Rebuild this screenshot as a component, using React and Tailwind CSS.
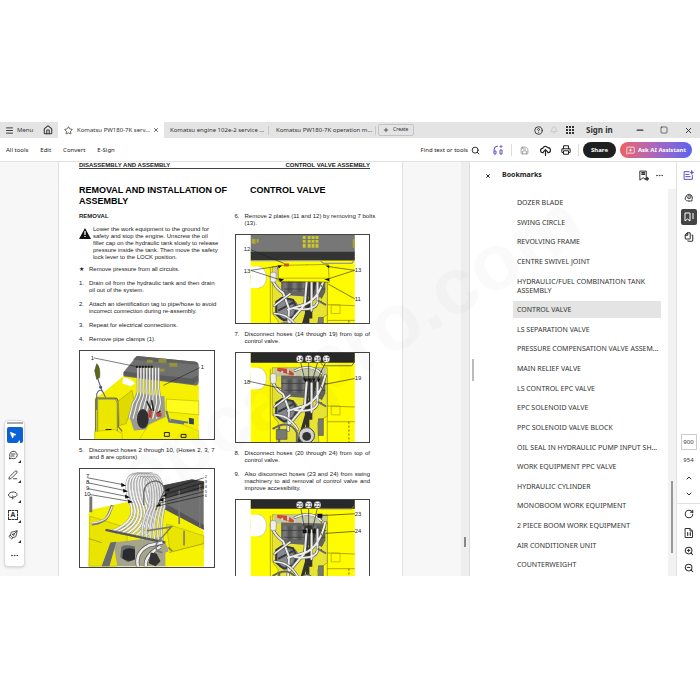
import React from "react";
import {
  Menu, House, Star, X, Plus, CircleHelp, Bell, Minus, Square, Search, Save,
  Printer, MessageSquarePlus, Ellipsis, Files, ChevronUp, ChevronDown, RotateCw,
  ZoomIn, ZoomOut, MousePointer2, PenLine, PenTool,
} from "lucide-react";

const bookmarks = [
  "DOZER BLADE",
  "SWING CIRCLE",
  "REVOLVING FRAME",
  "CENTRE SWIVEL JOINT",
  "HYDRAULIC/FUEL COMBINATION TANK ASSEMBLY",
  "CONTROL VALVE",
  "LS SEPARATION VALVE",
  "PRESSURE COMPENSATION VALVE ASSEM...",
  "MAIN RELIEF VALVE",
  "LS CONTROL EPC VALVE",
  "EPC SOLENOID VALVE",
  "PPC SOLENOID VALVE BLOCK",
  "OIL SEAL IN HYDRAULIC PUMP INPUT SH...",
  "WORK EQUIPMENT PPC VALVE",
  "HYDRAULIC CYLINDER",
  "MONOBOOM WORK EQUIPMENT",
  "2 PIECE BOOM WORK EQUIPMENT",
  "AIR CONDITIONER UNIT",
  "COUNTERWEIGHT",
];

const IconButton = ({ label, className = "", children }) => (
  <button type="button" aria-label={label} className={`flex shrink-0 items-center justify-center ${className}`}>
    {children}
  </button>
);

const Glyph = ({ size = 10, children }) => (
  <svg width={size} height={size} viewBox="0 0 20 20" fill="none" stroke="currentColor" strokeWidth="1.800" strokeLinecap="round" strokeLinejoin="round">
    {children}
  </svg>
);

const CloudArrow = () => (
  <Glyph size={11}>
    <path d="M6 14H5a4 4 0 0 1 0-8 5 5 0 0 1 9-1 4.500 4.500 0 0 1 1 9h-1" strokeWidth="2.200" />
    <path d="M10 19V9M6.500 12L10 8.500l3.500 3.500" strokeWidth="2.200" />
  </Glyph>
);

const CommentIcon = () => (
  <Glyph>
    <path d="M3 17l1-4a7.500 7.500 0 1 1 4 4zM7 8h7M7 12h5" />
  </Glyph>
);

const LoopIcon = () => (
  <Glyph>
    <path d="M9 15c-5 0-8-2-8-5s4-6 9-6 8 2 8 5-3 5-6 5c-2 0-3-1-3-2M9 15c3 0 2 3 0 3" />
  </Glyph>
);

const BookmarkAddIcon = () => (
  <Glyph size={11}>
    <path d="M4 2h11v16l-5.500-4L4 18z" />
    <path d="M7 5h5M7 8h5" strokeWidth="2.500" />
    <path d="M12 16h7M16.500 13.500L19 16l-2.500 2.500" strokeWidth="2.200" />
  </Glyph>
);

const SummaryIcon = () => (
  <Glyph size={11}>
    <path d="M11 3H2v14h15v-7M5 8h6M5 12h8" />
    <path d="M16 1l1 2.500L19.500 4.500 17 5.500 16 8l-1-2.500L12.500 4.500 15 3.500z" fill="currentColor" strokeWidth="1" />
  </Glyph>
);

const RepliesIcon = () => (
  <Glyph>
    <path d="M3 13a7 7 0 1 1 13 2v3h-6" />
    <path d="M6 9c1-3 7-4 8 0s-3 5-6 4c-2-1-1-3 1-3h4M2 14c1 3 4 4 8 4" />
  </Glyph>
);

const PageIcon = () => (
  <Glyph>
    <path d="M3 1h9l5 5v13H3zM12 1v5h5" strokeWidth="2" />
    <path d="M7 9v6M13 9v6M10 10v.5M10 13.500v.5" />
  </Glyph>
);

const TabBar = () => (
  <div className="flex h-4 items-center bg-[#e4e4e4] text-[6px] text-[#333]">
    <button type="button" className="flex w-[37px] items-center gap-[3px] pl-[5px]">
      <Menu size={9} strokeWidth={2.500} /> Menu
    </button>
    <IconButton label="Home" className="w-[21px]"><House size={10} strokeWidth={2.500} /></IconButton>
    <div className="flex h-4 w-[106px] items-center bg-white pl-[6px] pr-[5px]">
      <Star size={9} />
      <span className="ml-1 flex-1 whitespace-nowrap">Komatsu PW180-7K serv...</span>
      <IconButton label="Close tab"><X size={6} strokeWidth={3} /></IconButton>
    </div>
    <span className="w-[105px] whitespace-nowrap border-r border-[#c8c8c8] pl-[6px]">Komatsu engine 102e-2 service ...</span>
    <span className="w-[107px] whitespace-nowrap border-r border-[#c8c8c8] pl-[7px]">Komatsu PW180-7K operation m...</span>
    <button type="button" className="ml-[2px] flex h-3 w-[36px] items-center gap-1 rounded-[2px] border border-[#c4c4c4] pl-1 text-[5px]">
      <Plus size={6} strokeWidth={3} /> Create
    </button>
    <div className="flex-1" />
    <div className="flex items-center">
      <IconButton label="Help" className="w-4"><CircleHelp size={9} strokeWidth={2.500} /></IconButton>
      <IconButton label="Notifications" className="w-4 text-[#bbb]"><Bell size={8} /></IconButton>
      <IconButton label="Apps" className="w-4">
        <svg width="8" height="8" viewBox="0 0 8 8" fill="#333">
          {[0, 3, 6].map((y) => [0, 3, 6].map((x) => <rect key={`${x}${y}`} x={x} y={y} width="2" height="2" />))}
        </svg>
      </IconButton>
      <button type="button" className="ml-2 w-[44px] text-left text-[8px] leading-4 font-bold">Sign in</button>
      <IconButton label="Minimize" className="w-5"><Minus size={10} strokeWidth={3} /></IconButton>
      <IconButton label="Maximize" className="ml-1 w-5"><Square size={8} /></IconButton>
      <IconButton label="Close" className="ml-1 mr-[2px] w-5"><X size={9} strokeWidth={2.500} /></IconButton>
    </div>
  </div>
);

const Toolbar = () => (
  <div className="flex h-6 items-center border-b border-[#e2e2e2] bg-white pt-px text-[6px] text-[#222]">
    <nav className="flex items-center gap-3 pl-[6px]">
      <button type="button">All tools</button>
      <button type="button">Edit</button>
      <button type="button">Convert</button>
      <button type="button">E-Sign</button>
    </nav>
    <div className="flex-1" />
    <button type="button" className="flex items-center gap-[3px]">Find text or tools <Search size={9} strokeWidth={2.500} /></button>
    <IconButton label="Read aloud" className="ml-3 w-[13px] text-[#5a50c8]">
      <svg width="11" height="10" viewBox="0 0 11 10" fill="none" stroke="currentColor">
        <path d="M1 9V5a4 4 0 0 1 4-4M1 6h2v3H1M7 5v4M7 5h2v4H7" />
        <path d="M8 0v3M6.500 1.500h3" strokeWidth=".8" />
      </svg>
    </IconButton>
    <span className="ml-[6px] h-3 w-px bg-[#ddd]" />
    <IconButton label="Save" className="ml-[6px] w-3 text-[#888]"><Save size={9} /></IconButton>
    <IconButton label="Upload" className="ml-[9px] w-3"><CloudArrow /></IconButton>
    <IconButton label="Print" className="ml-[9px] w-3"><Printer size={10} strokeWidth={2.500} /></IconButton>
    <span className="ml-[6px] h-3 w-px bg-[#ddd]" />
    <button type="button" className="ml-[4px] h-4 w-[33px] rounded-full bg-[#1f1f1f] text-[6px] font-bold text-white">Share</button>
    <button type="button" className="ml-1 mr-2 flex h-4 w-[72px] items-center justify-center gap-[3px] whitespace-nowrap rounded-full bg-linear-to-r from-[#ee5f62] via-[#a865c0] to-[#5962ee] text-[6px] font-bold text-white">
      <MessageSquarePlus size={9} /> Ask AI Assistant
    </button>
  </div>
);

/* A list entry of the manual; every line but the last runs the full column */
const Step = ({ n, lines }) => (
  <div className="flex">
    <span className="w-[10px] shrink-0">{n}</span>
    <div className="flex-1">
      {lines.map((line, i) => (
        <p
          key={line}
          className={i < lines.length - 1 ? "whitespace-nowrap [text-align-last:justify]" : "whitespace-nowrap"}
        >
          {line}
        </p>
      ))}
    </div>
  </div>
);

const Label = ({ x, y, size = 6, children }) => (
  <text x={x} y={y} fontSize={size} fill="#222" fontFamily="Liberation Sans, sans-serif">{children}</text>
);

const ClampFigure = () => (
  <svg viewBox="0 0 136 90" className="block w-full border border-[#444]">
    <path d="M15 91V48l8-5 22-18 14-4 62 13v57z" fill="#f4f000" />
    <path d="M18 49h18l2 4v29l-6 2-14 4z" fill="#ece700" stroke="#777" strokeWidth=".8" />
    <path d="M16 91V50q0-3 4-2h15q4 0 4 5v24l4 5" fill="none" stroke="#666" strokeWidth="1.200" />
    <path d="M15 82l20-2 8 4v7H15z" fill="#f4f000" stroke="#aaa000" strokeWidth=".5" />
    <path d="M39 51l14-11 2 10-8 24-7 2z" fill="#dfda00" stroke="#999300" strokeWidth=".5" />
    <path d="M88 49l33 2v14l-33-3z" fill="#fffb1c" stroke="#b5ae00" strokeWidth=".6" />
    <path d="M58 5l60 6q3 1 3 4v17q-1 4-5 3l-14-2-57-7-1-4z" fill="#707070" />
    <path d="M58 5l60 6q2 1 2 3l-66-5z" fill="#606060" />
    <path d="M44 25l57 7 14 2 5-4v-5l-6 3-69-7z" fill="#5b5b5b" />
    <path d="M68 9h6v3h-6zM80 8h8v4h-8zM91 12h8v4h-8zM66 16h5v3h-5zM80 18h6v3h-6z" fill="#a19b35" opacity=".8" />
    <path d="M44 27q8 1 12 6l-4 3-9-3z" fill="#fff" />
    <path d="M17 13q4 3 3 14l-3 2-2-9z" fill="#5e6810" stroke="#333" strokeWidth=".5" />
    <path d="M18 28l5 14M17 60V44q2-6 6-3l3 6" fill="none" stroke="#667" strokeWidth="1.100" />
    <circle cx="21" cy="37" r="1.500" fill="#43537a" />
    <path d="M57 43l29 3 1 22-8 11-24 2-5-15z" fill="#9c9c93" />
    <g fill="none">
      {[0, 1, 2, 3, 4, 5, 6, 7].map((i) => (
        <path key={i} d={`M${59 + i * 3} 17v20q1 8 ${-5 + i} 16l-4 16`} stroke="#888" strokeWidth="2.300" />
      ))}
      {[0, 1, 2, 3, 4, 5, 6, 7].map((i) => (
        <path key={i} d={`M${59 + i * 3} 17v20q1 8 ${-5 + i} 16l-4 16`} stroke="#eee" strokeWidth="1.300" />
      ))}
    </g>
    <ellipse cx="64" cy="69" rx="6" ry="10" fill="#303033" />
    <path d="M68 51l5 10M73 50l2 11M78 64l4-3" stroke="#222" strokeWidth="1.500" />
    <path d="M70 60h3v8h-3zM78 63h5v4h-5z" fill="#c63b2c" />
    <path d="M70 75l17-8 34 15v9H60z" fill="#f5f100" stroke="#aaa400" strokeWidth=".4" />
    <path d="M88 61l3 11 15 2M92 70l18 3" fill="none" stroke="#677484" strokeWidth="2" />
    <path d="M111 68l5 1v6l-5-1z" fill="#35445e" />
    <path d="M86 83h5v4h-5zM103 85h5v3h-5zM26 80h6" fill="none" stroke="#222" />
    <path d="M57 16h18" stroke="#111" strokeWidth="2" strokeDasharray="2 1" />
    <path d="M14 7l44 9M122 17L85 35" stroke="#222" strokeWidth=".6" />
    <Label x={11} y={9}>1</Label>
    <Label x={123} y={18}>1</Label>
  </svg>
);

const HoseFigure = () => (
  <svg viewBox="0 0 136 99" className="block w-full border border-[#444]">
    <path d="M9 99V42l38-8 40 1 39 28v36z" fill="#f4f100" />
    <path d="M85 17l29-6 12 2v49L84 39z" fill="#707070" />
    <path d="M85 17l29-6 12 2v7L87 29zM86 36l40 25" fill="#414141" stroke="#444" />
    <path d="M90 37l36 20v5L86 41z" fill="#555" />
    <path d="M101 22v34M122 16v44" stroke="#777" strokeWidth="1.500" />
    <path d="M10 48l38 12v31l-11 8H9zM88 56l38 12v13l-34 6z" fill="#e9e500" stroke="#b3ad00" strokeWidth=".6" />
    <path d="M11 28v16M33 37l-4 10q-4 8-17 9" fill="none" stroke="#777" strokeWidth="3" />
    <path d="M33 38l-4 9q-4 7-17 8" fill="none" stroke="#e1e1d8" strokeWidth="1.500" />
    <path d="M34 75l49-6 7 12-1 18H38z" fill="#a5a58b" />
    <g fill="none">
      {[0, 1, 2, 3, 4, 5, 6, 7].map((i) => {
        const d = `M${31 + i * 5} ${64 + i} Q${61 + i * 3} 53 ${50 + i * 3} 32 Q${42 + i * 3} 4 ${60 + i * 2} 5`;
        return (
          <React.Fragment key={i}>
            <path d={d} stroke="#888" strokeWidth="2.600" />
            <path d={d} stroke="#f3f3f3" strokeWidth="1.800" />
          </React.Fragment>
        );
      })}
      {[0, 1, 2, 3, 4, 5].map((i) => {
        const d = `M${60 + i * 3} 6 Q${75 + i * 2} 6 ${71 + i * 3} 38 Q${61 + i * 4} 57 ${64 + i * 4} 72`;
        return (
          <React.Fragment key={i}>
            <path d={d} stroke="#888" strokeWidth="2.600" />
            <path d={d} stroke="#e3e3e3" strokeWidth="1.800" />
          </React.Fragment>
        );
      })}
    </g>
    <path d="M65 37V24q1-11 12-12q8 1 9 10l-9 20" fill="none" stroke="#666" strokeWidth="1.300" />
    <path d="M26 62l61 13" stroke="#555" strokeWidth="2.500" />
    <path d="M31 75l6-1-7 25h-8zM42 80q1-4 14-1v13l-7 3-8-5z" fill="#696c6e" />
    <path d="M44 83q5-4 12-1v10q-7 4-13-1z" fill="#292b2e" />
    <path d="M59 99q-3-14 11-21l14-3M67 99q-1-11 15-20" fill="none" stroke="#555" strokeWidth="4" />
    <path d="M59 99q-3-14 11-21l14-3M67 99q-1-11 15-20" fill="none" stroke="#eee" strokeWidth="2.600" />
    <path d="M68 63l25-4-15 17q-3 8 6 9M90 80l11 10M106 63v15" fill="none" stroke="#777" strokeWidth="1.500" />
    <path d="M72 85l6 1 4 8-5 5-7-3z" fill="#333" />
    <path d="M87 99V85l39-9v23z" fill="#f7f300" />
    <path d="M9 71l13 4M91 85l35-9" stroke="#aaa400" />
    <path d="M8 9l36 7M8 14l38 8M8 20l40 8M10 26l41 7M126 9L89 21M126 14L86 26M126 18L83 31M126 23L80 35M126 27L78 38" stroke="#111" strokeWidth=".6" />
    <path d="M42 14l5 3-5 1zM44 20l5 3-5 1zM46 26l5 3-5 1zM49 31l5 3-5 1zM91 19l-5 3 5 1zM88 25l-5 3 5 0zM85 29l-5 3 5 1zM82 35l-5 3 5 0z" fill="#111" />
    <Label x={6} y={9}>7</Label>
    <Label x={6} y={15}>8</Label>
    <Label x={6} y={21}>9</Label>
    <Label x={4} y={28}>10</Label>
    {[2, 3, 4, 5, 6].map((n, i) => <Label key={n} x={127} y={9 + i * 5} size={4}>{n}</Label>)}
  </svg>
);

/* Upper structure seen from above, shared by the three valve figures */
const Valve = () => (
  <g>
    <rect x="15" width="106" height="100" fill="#fffb00" />
    <path d="M35 16v84M93 22v78M93 54l28 1M93 70h28" stroke="#777100" strokeWidth=".6" />
    <path d="M37 15h56v49l-10 7 2 29H41l2-29-6-8z" fill="#e6e333" stroke="#77732d" strokeWidth=".5" />
    <path d="M39 15h53v9H39z" fill="#c5c79f" />
    <path d="M42 15l10 1 9 6-4 1-15-5z" fill="#d14930" />
    <path d="M46 23l45 1v17l-3 6-39-3-3-4z" fill="#656562" />
    {[0, 1, 2, 3, 4, 5, 6, 7].map((i) => (
      <rect key={i} x={48 + i * 5} y={26 + (i % 2)} width="3.500" height="14" fill={i % 2 ? "#555" : "#777"} />
    ))}
    <path d="M46 31h46M49 38h42" stroke="#3e3e40" strokeWidth=".8" />
    <path d="M47 21v-3M53 21v-5M60 23v-4M68 24v-5M77 23v-4M84 23v-4" stroke="#ccc" strokeWidth="2" />
    <circle cx="52" cy="59" r="12" fill="#696c6e" />
    <circle cx="50" cy="59" r="9" fill="#85898d" />
    <path d="M41 51l6-4 11 2 4 9-3 8-10 4-8-6zM43 60l15-8" fill="none" stroke="#36383a" strokeWidth="2" />
    <path d="M72 26v37l-8 28M76 26v42M81 29l-8 30v35" fill="none" stroke="#34332b" strokeWidth="3.500" />
    <g fill="none" strokeLinecap="round">
      <path d="M36 26q3 10 12 16l6 16-1 21M91 23q-6 24-19 30l-19 6M72 30l-2 24-17 20M77 31v29M83 30v22q-3 9-23 6" stroke="#555" strokeWidth="3.200" />
      <path d="M36 26q3 10 12 16l6 16-1 21M91 23q-6 24-19 30l-19 6M72 30l-2 24-17 20M77 31v29M83 30v22q-3 9-23 6" stroke="#ececec" strokeWidth="2" />
      <path d="M39 55l16-12M39 63q15 0 24 15M60 18q16-8 27 3" stroke="#555" strokeWidth="2.500" />
      <path d="M39 55l16-12M39 63q15 0 24 15M60 18q16-8 27 3" stroke="#eee" strokeWidth="1.600" />
      <path d="M38 77q16-10 24 4v19M73 76l-8 22M44 75v18M84 50l7 4" stroke="#666" strokeWidth="2" />
    </g>
    <ellipse cx="23" cy="26" rx="8" ry="11" fill="#fff" stroke="#aaa" strokeWidth=".5" />
    <path d="M15 15h8v22h-8z" fill="#fff" />
    <rect x="35" y="21" width="6" height="10" rx="2" fill="#eee" stroke="#777" strokeWidth=".5" />
    <path d="M41 78h11v10H41zM84 67h5v17h-5z" fill="#767a72" stroke="#444" strokeWidth=".5" />
    <circle cx="72" cy="84" r="8" fill="#d0d1cf" stroke="#444" />
    <circle cx="72" cy="85" r="4.500" fill="#333" />
    <path d="M97 54h9v9h-9z" fill="none" stroke="#aca600" strokeWidth=".7" />
    <path d="M115 70v21M87 18v33" stroke="#6a6506" strokeWidth="1" strokeDasharray="2 2" />
  </g>
);

const PlateFigure = () => (
  <svg viewBox="0 0 136 90" className="block w-full border border-[#444]">
    <g transform="translate(0 17)"><Valve /></g>
    <rect x="15" width="106" height="18" fill="#777" />
    <path d="M15 17h106v9H15z" fill="#343434" />
    <path d="M15 26h71l3 3h29l2-3" fill="none" stroke="#999" strokeWidth="1.300" />
    {[68, 73, 77, 81].map((x) => (
      <path key={x} d={`M${x} 1h3v3h-3zM${x} 5h3v3h-3zM${x} 9h3v4h-3z`} fill="#cbc829" />
    ))}
    <path d="M16 4h4v5h-4zM21 4h2v4h-2zM119 4h2v9h-2z" fill="#b6a630" />
    <path d="M43 31l51-1 1 18-52-1z" fill="#fffb00" stroke="#888200" strokeWidth=".7" />
    <path d="M44 44h49" stroke="#aaa400" strokeWidth=".8" />
    <path d="M49 29h5v3h-5z" fill="#cc5134" />
    <path d="M15 15l34 14M15 36l27-4M15 36l28 9M121 36l-28-4M121 36l-28 9M121 65L94 50" stroke="#222" strokeWidth=".6" />
    <path d="M42 31h5l-3 3zM91 31h4v3zM43 44l6 1-4 3zM90 45l5-1v3z" fill="#111" />
    <Label x={8} y={16}>12</Label>
    <Label x={8} y={39}>13</Label>
    <Label x={121} y={38}>13</Label>
    <Label x={121} y={67}>11</Label>
  </svg>
);

const Balloon = ({ x, y, children }) => (
  <g>
    <circle cx={x} cy={y} r="3.600" fill="#fff" stroke="#222" strokeWidth=".4" />
    <text x={x} y={y + 2} fontSize="5" textAnchor="middle" fontFamily="Liberation Sans, sans-serif">{children}</text>
  </g>
);

const TopHoseFigure = () => (
  <svg viewBox="0 0 136 90" className="block w-full border border-[#444]">
    <Valve />
    <path d="M15 0h106v10H15z" fill="#292929" />
    <path d="M86 10l3 3h29l2-3" fill="none" stroke="#666" />
    <path d="M66 10l4 17M74 10v17M83 10l-5 17M91 10l-8 17M14 29l32 7M121 26l-31 6" stroke="#111" strokeWidth=".6" />
    <path d="M68 26h4l-1 4zM73 26h3l-1 4zM78 26h3l-2 4zM83 26h3l-2 4z" fill="#111" />
    <Balloon x={65} y={6}>14</Balloon>
    <Balloon x={74} y={6}>15</Balloon>
    <Balloon x={83} y={6}>16</Balloon>
    <Balloon x={92} y={6}>17</Balloon>
    <Label x={8} y={32}>18</Label>
    <Label x={121} y={28}>19</Label>
  </svg>
);

const SwingHoseFigure = () => (
  <svg viewBox="0 0 136 78" className="block w-full border border-b-0 border-[#444]">
    <Valve />
    <path d="M15 0h106v9H15z" fill="#292929" />
    <path d="M86 9h32l2-3" fill="none" stroke="#777" />
    <path d="M66 8l4 22M74 8v22M83 8l-5 22M121 14l-36 2M121 32l-30 2" stroke="#111" strokeWidth=".6" />
    <path d="M68 30h4v4h-4zM73 30h3v4h-3zM78 30h3v4h-3zM83 14h5v4h-5z" fill="#111" />
    <Balloon x={65} y={5}>20</Balloon>
    <Balloon x={74} y={5}>21</Balloon>
    <Balloon x={83} y={5}>22</Balloon>
    <Label x={121} y={16}>23</Label>
    <Label x={121} y={34}>24</Label>
  </svg>
);

const ManualPage = () => (
  <article className="mx-auto w-full max-w-[345px] border-x border-[#e0e0e0] bg-white pl-5 pr-8 font-['Liberation_Sans',sans-serif] text-[6px] leading-[7px] text-[#222]">
    <header className="flex justify-between border-b border-[#444] text-[6px] leading-[6px] font-bold">
      <span>DISASSEMBLY AND ASSEMBLY</span>
      <span>CONTROL VALVE ASSEMBLY</span>
    </header>
    <h1 className="mt-4 text-[9px] leading-[11px] font-bold text-black">
      <span className="mr-[23px]">REMOVAL AND INSTALLATION OF</span>
      <span>CONTROL VALVE</span>
      <br />
      ASSEMBLY
    </h1>
    <div className="mt-[6px] grid grid-cols-2 gap-5">
      <section className="min-w-0">
        <h2 className="font-bold">REMOVAL</h2>
        <div className="mt-[6px] flex gap-[2px]">
          <svg width="12" height="11" viewBox="0 0 12 11" className="mt-[2px] shrink-0">
            <path d="M6 0l6 11H0z" fill="#111" />
            <path d="M6 3v4M6 8v1" stroke="#fff" strokeWidth="1.300" />
          </svg>
          <p className="whitespace-nowrap">
            Lower the work equipment to the ground for<br />
            safety and stop the engine. Unscrew the oil<br />
            filler cap on the hydraulic tank slowly to release<br />
            pressure inside the tank. Then move the safety<br />
            lock lever to the LOCK position.
          </p>
        </div>
        <div className="mt-[5px] flex flex-col gap-[7px]">
          <Step n="★" lines={["Remove pressure from all circuits."]} />
          <Step n="1." lines={["Drain oil from the hydraulic tank and then drain", "oil out of the system."]} />
          <Step n="2." lines={["Attach an identification tag to pipe/hose to avoid", "incorrect connection during re-assembly."]} />
          <Step n="3." lines={["Repeat for electrical connections."]} />
          <Step n="4." lines={["Remove pipe clamps (1)."]} />
          <ClampFigure />
          <Step n="5." lines={["Disconnect hoses 2 through 10, (Hoses 2, 3, 7", "and 8 are options)"]} />
          <HoseFigure />
        </div>
      </section>
      <section className="flex min-w-0 flex-col gap-[7px]">
        <Step n="6." lines={["Remove 2 plates (11 and 12) by removing 7 bolts", "(13)."]} />
        <PlateFigure />
        <Step n="7." lines={["Disconnect hoses (14 through 19) from top of", "control valve."]} />
        <TopHoseFigure />
        <Step n="8." lines={["Disconnect hoses (20 through 24) from top of", "control valve."]} />
        <Step n="9." lines={["Also disconnect hoses (23 and 24) from swing", "machinery to aid removal of control valve and", "improve accessibility."]} />
        <SwingHoseFigure />
      </section>
    </div>
  </article>
);

const PaletteTool = ({ label, children }) => (
  <button type="button" aria-label={label} className="mt-1 flex h-4 w-4 items-center justify-center">
    {children}
    <svg width="3" height="3" viewBox="0 0 3 3" className="self-end"><path d="M3 0v3H0z" fill="currentColor" /></svg>
  </button>
);

const Palette = () => (
  <div className="absolute bottom-[9px] left-1 flex w-[21px] flex-col items-center rounded-sm border border-[#ddd] bg-white pb-[3px] text-[#333] shadow-sm">
    <span className="mt-px h-[2px] w-4 bg-[#aaa]" />
    <button type="button" aria-label="Select" className="mt-[3px] flex h-4 w-4 items-center justify-center rounded-[2px] bg-[#0b62d6] text-white">
      <MousePointer2 size={8} fill="white" />
      <svg width="3" height="3" viewBox="0 0 3 3" className="self-end"><path d="M3 0v3H0z" fill="currentColor" /></svg>
    </button>
    <PaletteTool label="Comment"><CommentIcon /></PaletteTool>
    <PaletteTool label="Draw"><PenLine size={10} /></PaletteTool>
    <PaletteTool label="Lasso"><LoopIcon /></PaletteTool>
    <PaletteTool label="Text">
      <span className="h-[10px] w-[10px] border border-dashed border-[#333] text-center text-[7px] leading-[8px] font-bold">A</span>
    </PaletteTool>
    <PaletteTool label="Sign"><PenTool size={10} className="-scale-x-100" /></PaletteTool>
    <IconButton label="More" className="mt-1 h-4 w-4"><Ellipsis size={9} /></IconButton>
  </div>
);

const BookmarksPanel = () => (
  <aside className="flex w-[207px] shrink-0 flex-col border-l border-[#dcdcdc] bg-white text-[#333]">
    <div className="flex h-[27px] items-center pl-[15px] pr-3">
      <IconButton label="Close panel"><X size={6} strokeWidth={4} /></IconButton>
      <h2 className="ml-[11px] flex-1 text-[7px] font-bold text-[#222]">Bookmarks</h2>
      <IconButton label="Add bookmark"><BookmarkAddIcon /></IconButton>
      <IconButton label="Options" className="ml-[6px]"><Ellipsis size={9} /></IconButton>
    </div>
    <div className="flex flex-1">
      <div className="w-[43px] shrink-0 pl-[2px] pt-[170px]">
        <div className="h-[22px] w-[2px] bg-[#bbb]" />
      </div>
      <ul className="flex min-w-0 flex-1 flex-col justify-between pb-[3px] pt-[5px] text-[7px] leading-[9px]">
        {bookmarks.map((title) => (
          <li key={title} className={title === "CONTROL VALVE" ? "bg-[#e4e4e4]" : ""}>
            <a
              href="#page"
              className={title.endsWith("...") ? "block whitespace-nowrap py-1 pl-1" : "block py-1 pl-1 pr-2"}
            >
              {title}
            </a>
          </li>
        ))}
      </ul>
      <div className="ml-[7px] flex w-2 shrink-0 flex-col items-center bg-[#f2f2f2]">
        <div className="mt-[292px] h-[72px] w-[2px] bg-[#999]" />
      </div>
    </div>
  </aside>
);

const SideRail = () => (
  <div className="flex w-6 shrink-0 flex-col items-center border-l border-[#e2e2e2] bg-white text-[7px] text-[#333]">
    <IconButton label="Assistant" className="h-[27px] text-[#5a50c8]"><SummaryIcon /></IconButton>
    <IconButton label="Comments" className="h-4"><RepliesIcon /></IconButton>
    <IconButton label="Bookmarks" className="mt-1 h-4 w-4 rounded-[2px] bg-[#444] text-white">
      <svg width="10" height="10" viewBox="0 0 10 10" fill="none" stroke="currentColor">
        <path d="M1 1h5v8L3.500 7 1 9zM8 2h2M8 4h2M8 6h2" />
      </svg>
    </IconButton>
    <IconButton label="Pages" className="mt-1 h-4"><Files size={10} strokeWidth={2.500} className="-scale-x-100" /></IconButton>
    <div className="flex-1" />
    <input aria-label="Page" defaultValue="900" className="h-4 w-4 border border-[#ccc] text-center text-[6px]" />
    <span className="mt-1 text-[6px] leading-3">954</span>
    <IconButton label="Previous page" className="mt-1 h-4"><ChevronUp size={8} strokeWidth={3} /></IconButton>
    <IconButton label="Next page" className="h-4"><ChevronDown size={8} strokeWidth={3} /></IconButton>
    <span className="mt-px h-px w-full bg-[#e2e2e2]" />
    <IconButton label="Rotate" className="h-5"><RotateCw size={10} strokeWidth={2.500} /></IconButton>
    <IconButton label="Page display" className="h-[18px]"><PageIcon /></IconButton>
    <IconButton label="Zoom in" className="h-[18px]"><ZoomIn size={10} strokeWidth={2.500} /></IconButton>
    <IconButton label="Zoom out" className="h-4"><ZoomOut size={10} strokeWidth={2.500} /></IconButton>
  </div>
);

export default function App() {
  return (
    <div className="min-h-screen bg-white py-[122px] font-['Noto_Sans',sans-serif]">
      <div className="relative overflow-hidden">
        <TabBar />
        <Toolbar />
        <main className="flex">
          <div className="relative flex min-w-0 flex-1 bg-[#f7f7f7]">
            <div className="min-w-0 flex-1"><ManualPage /></div>
            <div className="flex w-2 flex-col items-center justify-end bg-[#eee] pb-[29px]">
              <div className="h-[10px] w-[2px] bg-[#888]" />
            </div>
            <Palette />
          </div>
          <BookmarksPanel />
          <SideRail />
        </main>
        <div aria-hidden="true" className="pointer-events-none absolute inset-0 flex items-center justify-center">
          <span className="-rotate-[31deg] whitespace-nowrap font-['Liberation_Sans',sans-serif] text-[80px] font-bold text-black/2">epcatpro.com</span>
        </div>
      </div>
    </div>
  );
}
